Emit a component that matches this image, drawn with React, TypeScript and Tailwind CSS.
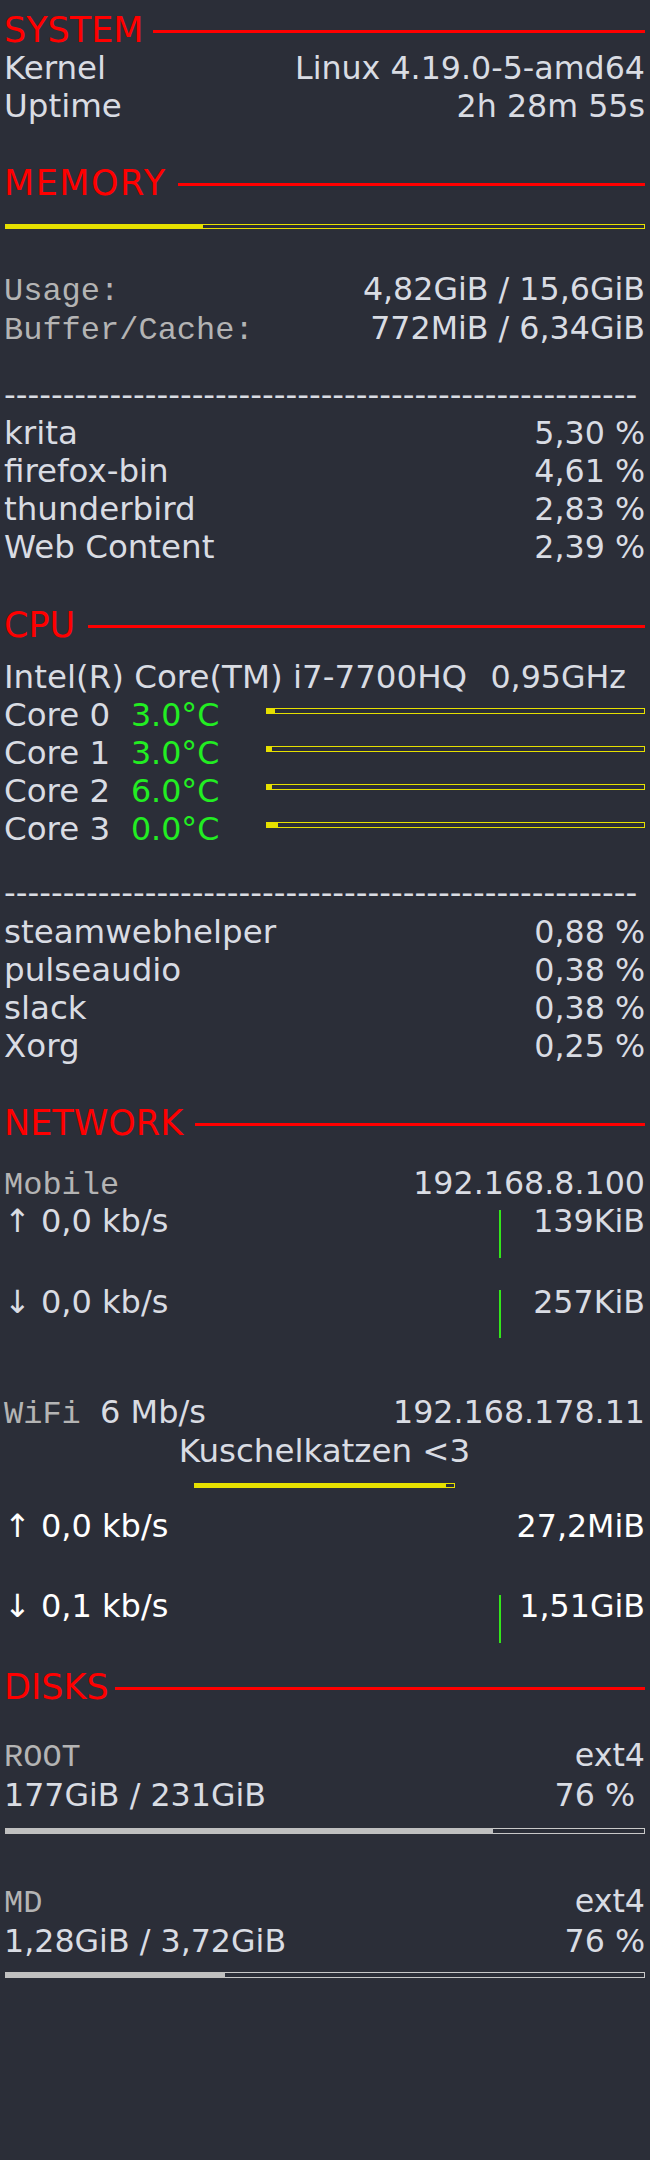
import React from "react";

// conky-style system monitor panel
const MONO = "font-['Liberation_Mono',monospace] text-[32px] text-[#b4b4b4]";
const YELLOW_FILL = "bg-[#e6e000]";
const YELLOW_EDGE = "border-[#e6e000]";
const GREY_FILL = "bg-[#c0c0c0]";
const GREY_EDGE = "border-[#c8c8c8]";

function Section({
  title,
  width,
  className = "",
}: {
  title: string;
  width: string;
  className?: string;
}) {
  return (
    <div className={`flex items-start h-[38px] ${className}`}>
      <span className={`text-[35px] leading-[38px] text-[#ff0000] whitespace-nowrap ${width}`}>{title}</span>
      <div className="flex-1 h-[3px] bg-[#ff0000] mt-[19px]" />
    </div>
  );
}

function Row({
  left,
  right,
  className = "",
  leftClass = "",
  rightClass = "",
}: {
  left: React.ReactNode;
  right?: React.ReactNode;
  className?: string;
  leftClass?: string;
  rightClass?: string;
}) {
  return (
    <div className={`flex justify-between items-baseline h-[38px] ${className}`}>
      <span className={`whitespace-pre ${leftClass}`}>{left}</span>
      <span className={`text-[31.7px] ${rightClass}`}>{right}</span>
    </div>
  );
}

function Bar({
  pct,
  fill,
  edge,
  className = "",
}: {
  pct: number;
  fill: string;
  edge: string;
  className?: string;
}) {
  return (
    <div className={`flex ${className}`}>
      <div className={`h-full ${fill}`} style={{ width: `${pct}%` }} />
      <div className={`h-full flex-1 border border-l-0 ${edge}`} />
    </div>
  );
}

function Graph({ top = "top-[8px]" }: { top?: string }) {
  return <div className={`absolute left-[495px] ${top} w-[2px] h-[48px] bg-[#33e61a]`} />;
}

const memProcs = [
  ["krita", "5,30 %"],
  ["firefox-bin", "4,61 %"],
  ["thunderbird", "2,83 %"],
  ["Web Content", "2,39 %"],
];

const cpuProcs = [
  ["steamwebhelper", "0,88 %"],
  ["pulseaudio", "0,38 %"],
  ["slack", "0,38 %"],
  ["Xorg", "0,25 %"],
];

const cores = [
  { name: "Core 0", temp: "3.0°C", load: 2.4 },
  { name: "Core 1", temp: "3.0°C", load: 1.6 },
  { name: "Core 2", temp: "6.0°C", load: 1.6 },
  { name: "Core 3", temp: "0.0°C", load: 3.2 },
];

const dashes = "-".repeat(54);

export default function App() {
  return (
    <div className="min-h-screen w-[650px] bg-[#2b2e38] text-[#d9dce3] pl-[4px] pr-[5px] pt-[11px] font-['DejaVu_Sans',sans-serif] text-[32.5px] leading-[38px]">
      {/* System */}
      <Section title="SYSTEM" width="w-[149px]" />
      <Row left="Kernel" right="Linux 4.19.0-5-amd64" />
      <Row left="Uptime" right="2h 28m 55s" />

      {/* Memory */}
      <Section title="MEMORY" width="w-[174px] tracking-[1.5px]" className="mt-[39px]" />
      <Bar pct={30.9} fill={YELLOW_FILL} edge={YELLOW_EDGE} className="h-[5px] ml-[1px] mt-[22px]" />
      <Row left={<span className={MONO}>Usage:</span>} right="4,82GiB / 15,6GiB" className="mt-[41px]" />
      <Row left={<span className={MONO}>Buffer/Cache:</span>} right="772MiB / 6,34GiB" className="mt-[1px]" />
      <div className="h-[38px] mt-[29px] overflow-hidden whitespace-nowrap">{dashes}</div>
      {memProcs.map(([name, val]) => (
        <Row key={name} left={name} right={val} />
      ))}

      {/* CPU */}
      <Section title="CPU" width="w-[84px]" className="mt-[40px]" />
      <Row left="Intel(R) Core(TM) i7-7700HQ" right="0,95GHz" rightClass="mr-[19px]" className="mt-[14px]" />
      {cores.map((c) => (
        <div key={c.name} className="flex items-start h-[38px]">
          <span className="whitespace-pre">{c.name}  </span>
          <span className="text-[#22ee22] text-[31.7px]">{c.temp}</span>
          <Bar pct={c.load} fill={YELLOW_FILL} edge={YELLOW_EDGE} className="ml-auto w-[379px] h-[6px] mt-[12px]" />
        </div>
      ))}
      <div className="h-[38px] mt-[26px] overflow-hidden whitespace-nowrap">{dashes}</div>
      {cpuProcs.map(([name, val], i) => (
        <Row key={name} left={name} right={val} className={i === 0 ? "mt-[1px]" : ""} />
      ))}

      {/* Network */}
      <Section title="NETWORK" width="w-[191px]" className="mt-[39px]" />
      <Row left={<span className={MONO}>Mobile</span>} right="192.168.8.100" className="mt-[22px]" />
      <div className="relative">
        <Row left="↑ 0,0 kb/s" right="139KiB" leftClass="text-[32px]" />
        <Graph />
      </div>
      <div className="relative mt-[43px]">
        <Row left="↓ 0,0 kb/s" right="257KiB" leftClass="text-[32px]" />
        <Graph top="top-[7px]" />
      </div>

      <Row
        left={
          <>
            <span className={MONO}>WiFi </span>
            <span className="text-[32px]">6 Mb/s</span>
          </>
        }
        right="192.168.178.11"
        className="mt-[72px]"
      />
      <div className="h-[38px] mt-[1px] text-center">Kuschelkatzen &lt;3</div>
      <Bar pct={96.6} fill={YELLOW_FILL} edge={YELLOW_EDGE} className="w-[261px] h-[5px] mx-auto mt-[13px]" />
      <Row left="↑ 0,0 kb/s" right="27,2MiB" leftClass="text-[32px]" className="mt-[19px] text-white" />
      <div className="relative mt-[42px] text-white">
        <Row left="↓ 0,1 kb/s" right="1,51GiB" leftClass="text-[32px]" />
        <Graph />
      </div>

      {/* Disks */}
      <Section title="DISKS" width="w-[111px]" className="mt-[43px]" />
      <Row left={<span className={MONO}>ROOT</span>} right="ext4" className="mt-[30px]" />
      <Row left="177GiB / 231GiB" right="76 %" leftClass="text-[31.7px]" rightClass="mr-[10px]" className="mt-[2px]" />
      <Bar pct={76.25} fill={GREY_FILL} edge={GREY_EDGE} className="h-[6px] ml-[1px] mt-[14px]" />
      <Row left={<span className={MONO}>MD</span>} right="ext4" className="mt-[48px]" />
      <Row left="1,28GiB / 3,72GiB" right="76 %" leftClass="text-[31.7px]" className="mt-[2px]" />
      <Bar pct={34.4} fill={GREY_FILL} edge={GREY_EDGE} className="h-[6px] ml-[1px] mt-[12px]" />
    </div>
  );
}
